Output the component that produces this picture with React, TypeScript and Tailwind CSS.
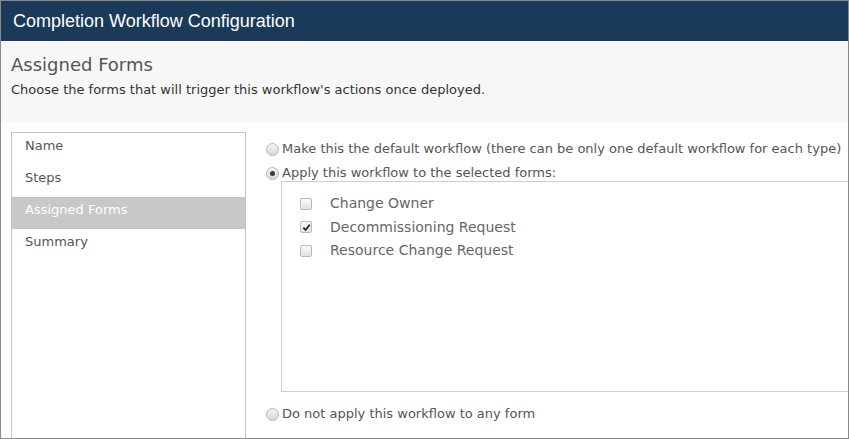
import { useState } from "react";

const NAV = ["Name", "Steps", "Assigned Forms", "Summary"];

const FORMS = [
  { id: "change-owner", label: "Change Owner", checked: false },
  { id: "decom", label: "Decommissioning Request", checked: true },
  { id: "resource", label: "Resource Change Request", checked: false },
];

function Radio({ on }: { on: boolean }) {
  return (
    <span className="mr-[3px] inline-flex h-[13px] w-[13px] shrink-0 items-center justify-center rounded-full border border-[#b5b5b5] bg-gradient-to-b from-[#f4f4f4] to-[#d8d8d8]">
      {on && <span className="h-[5px] w-[5px] rounded-full bg-[#3a3a3a]" />}
    </span>
  );
}

function Check({ on }: { on: boolean }) {
  return (
    <span className="inline-flex h-[12px] w-[12px] shrink-0 items-center justify-center rounded-[2px] border border-[#b8b8b8] bg-gradient-to-b from-[#fafafa] to-[#e2e2e2]">
      {on && (
        <svg viewBox="0 0 10 10" className="h-[9px] w-[9px]">
          <path d="M1.5 5.2 L4 7.8 L8.6 1.8" fill="none" stroke="#222" strokeWidth="1.9" />
        </svg>
      )}
    </span>
  );
}

export default function App() {
  const [mode, setMode] = useState("apply");
  const [forms, setForms] = useState(FORMS);

  return (
    <div className="h-[439px] w-[849px] overflow-hidden border border-[#8a8a8a] bg-white font-['DejaVu_Sans',Verdana,sans-serif] text-[#444]">
      {/* title bar */}
      <div className="flex h-[40px] items-center bg-[#1b3a5a] pl-[12px] font-['Liberation_Sans',Arial,sans-serif] text-[18px] text-white">
        Completion Workflow Configuration
      </div>

      {/* page heading */}
      <div className="h-[81px] bg-[#f7f7f7] px-[10px] pt-[12px]">
        <h1 className="text-[18px] leading-[24px] text-[#555]">Assigned Forms</h1>
        <p className="mt-[5px] text-[13px] leading-[16px] text-[#333]">
          Choose the forms that will trigger this workflow's actions once deployed.
        </p>
      </div>

      <div className="flex pl-[10px] pt-[10px]">
        {/* steps nav */}
        <div className="h-[310px] w-[235px] shrink-0 border border-[#c4c4c4]">
          {NAV.map((n) => (
            <div
              key={n}
              className={`h-[32px] pl-[13px] pt-[5px] text-[13px] leading-[16px] ${
                n === "Assigned Forms" ? "bg-[#c8c8c8] text-white" : "text-[#555]"
              }`}
            >
              {n}
            </div>
          ))}
        </div>

        {/* options */}
        <div className="min-w-0 flex-1 pl-[20px] pt-[9px] text-[13px] text-[#555]">
          <label className="flex h-[16px] items-center whitespace-nowrap" onClick={() => setMode("default")}>
            <Radio on={mode === "default"} />
            Make this the default workflow (there can be only one default workflow for each type)
          </label>
          <label className="mt-[8px] flex h-[16px] items-center whitespace-nowrap" onClick={() => setMode("apply")}>
            <Radio on={mode === "apply"} />
            Apply this workflow to the selected forms:
          </label>
          <div className="ml-[15px] h-[211px] border border-r-0 border-[#cfcfcf] pl-[18px] pt-[10px]">
            {forms.map((f) => (
              <label
                key={f.id}
                className="flex h-[23.5px] items-center gap-[18px] text-[14px] text-[#666]"
                onClick={() =>
                  setForms((p) => p.map((x) => (x.id === f.id ? { ...x, checked: !x.checked } : x)))
                }
              >
                <Check on={f.checked} />
                {f.label}
              </label>
            ))}
          </div>
          <label className="mt-[14px] flex h-[16px] items-center whitespace-nowrap" onClick={() => setMode("none")}>
            <Radio on={mode === "none"} />
            Do not apply this workflow to any form
          </label>
        </div>
      </div>
    </div>
  );
}
